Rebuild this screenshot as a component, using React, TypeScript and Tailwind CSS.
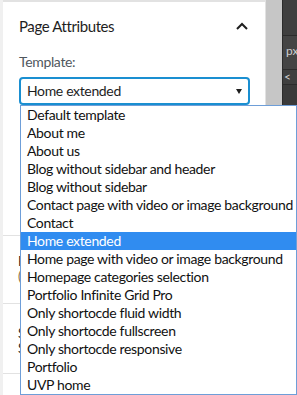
import React from 'react'

const TEMPLATES = [
  'Default template',
  'About me',
  'About us',
  'Blog without sidebar and header',
  'Blog without sidebar',
  'Contact page with video or image background',
  'Contact',
  'Home extended',
  'Home page with video or image background',
  'Homepage categories selection',
  'Portfolio Infinite Grid Pro',
  'Only shortocde fluid width',
  'Only shortocde fullscreen',
  'Only shortocde responsive',
  'Portfolio',
  'UVP home',
]

const SELECTED = 'Home extended'

function ChevronUp() {
  return (
    <svg width="12" height="8" viewBox="0 0 12 8" className="block">
      <polyline points="1,7 6,2 11,7" fill="none" stroke="#1e1e1e" strokeWidth="2" />
    </svg>
  )
}

function Caret() {
  return (
    <svg width="6" height="5" viewBox="0 0 6 5" className="block">
      <polygon points="0,0 6,0 3,5" fill="#1e1e1e" />
    </svg>
  )
}

export default function App() {
  return (
    <div
      className="relative flex w-[297px] h-[395px] overflow-hidden bg-white"
      style={{ fontFamily: 'Lato, "Open Sans", sans-serif' }}
    >
      <div className="w-[3px] shrink-0 bg-[#f0f0f0]" />

      {/* sidebar panel */}
      <div className="w-[263px] shrink-0 border-t-2 border-r border-[#e2e2e2] bg-white">
        <div className="pl-[16px] pr-[17px] pt-[14px]">
          <div className="flex items-center justify-between h-[20px]">
            <span className="text-[15px] leading-[20px] tracking-[-0.4px] text-[#1e1e1e]">Page Attributes</span>
            <ChevronUp />
          </div>
          <div className="mt-[16px] text-[14px] leading-[20px] tracking-[-0.35px] text-[#50575e]">Template:</div>
          <div className="mt-[5px] flex items-center justify-between h-[28px] w-[231px] rounded-[4px] border-2 border-[#1a8fd1] pl-[6px] pr-[6px]">
            <span className="text-[14px] leading-[18px] tracking-[-0.35px] text-[#1e1e1e]">{SELECTED}</span>
            <Caret />
          </div>
        </div>

        {/* content hidden under the open list */}
        <div className="mt-[130px] border-t border-[#e2e2e2] pl-[15px] pt-[18px] h-[68px] text-[13px] leading-[15px] text-[#1e1e1e]">
          <div>Parent Page</div>
          <div className="text-[#8a6d3b]">(no parent)</div>
        </div>
        <div className="border-t border-[#e2e2e2] pl-[15px] pt-[22px] h-[70px] text-[13px] leading-[15px] text-[#1e1e1e]">
          <div>Sticky</div>
          <div>Status</div>
        </div>
        <div className="border-t border-[#e2e2e2]" />
      </div>

      {/* scrollbar */}
      <div className="w-[16px] shrink-0 bg-[#c6c6c6]" />

      {/* dark editor side */}
      <div className="flex-1 border-l border-[#2b2b2b] bg-[#3f3f3f] text-[12px] text-[#cfcfcf]">
        <div className="h-[36px] border-b border-[#2c2c2c]" />
        <div className="h-[34px] border-b border-[#2c2c2c] bg-[#444] pl-[3px] pt-[8px] leading-[14px]">px</div>
        <div className="h-[15px] border-b border-[#2c2c2c] pl-[1px] leading-[14px]">&lt;</div>
        <div className="h-full bg-[#3a3a3a]" />
      </div>

      {/* open select list */}
      <div className="absolute left-[20px] top-[105px] w-[277px] h-[290px] border border-[#6e9ed8] bg-white">
        {TEMPLATES.map(t => (
          <div
            key={t}
            className={
              t === SELECTED
                ? 'h-[18px] pl-[6px] text-[14px] leading-[18px] tracking-[-0.35px] whitespace-nowrap bg-[#308cf0] text-white'
                : 'h-[18px] pl-[6px] text-[14px] leading-[18px] tracking-[-0.35px] whitespace-nowrap text-[#111]'
            }
          >
            {t}
          </div>
        ))}
      </div>
    </div>
  )
}
